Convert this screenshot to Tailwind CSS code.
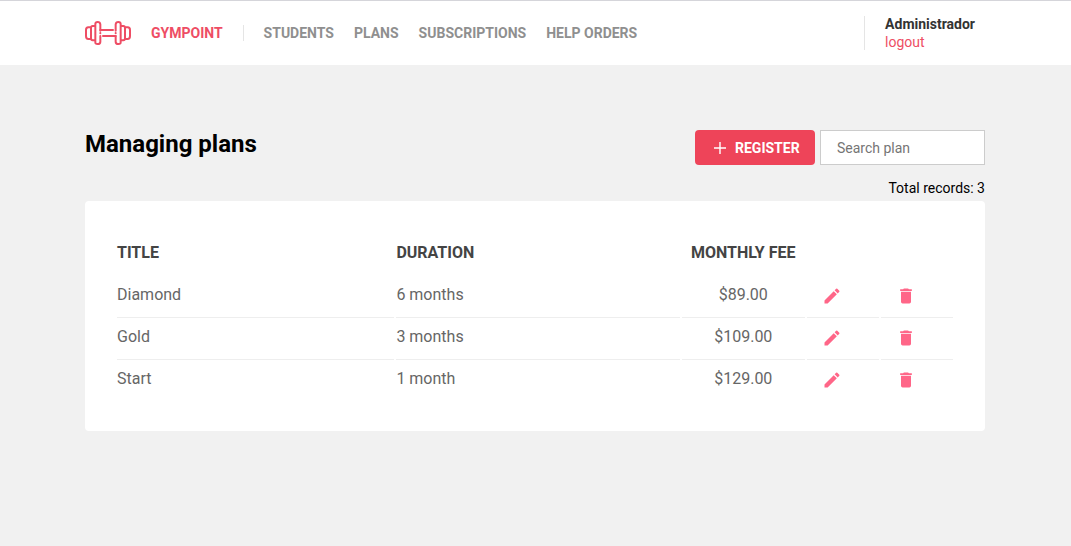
<!DOCTYPE html>
<html lang="en">
<head>
<meta charset="utf-8">
<meta name="viewport" content="width=device-width, initial-scale=1">
<title>Gympoint - Managing plans</title>
<script src="https://cdn.jsdelivr.net/npm/@tailwindcss/browser@4"></script>
</head>
<body class="min-h-screen bg-[#f1f1f1] font-[Roboto,sans-serif] text-sm text-black antialiased">
<svg class="hidden" aria-hidden="true">
  <symbol id="pencil" viewBox="0 0 24 24"><path d="M3 17.25V21h3.750L17.810 9.940l-3.750-3.750L3 17.250zM20.710 7.040a1 1 0 0 0 0-1.410l-2.340-2.340a1 1 0 0 0-1.410 0l-1.830 1.830 3.750 3.750 1.830-1.830z"/></symbol>
  <symbol id="trash" viewBox="0 0 24 24"><path d="M6 19a2 2 0 0 0 2 2h8a2 2 0 0 0 2-2V7H6v12zM19 4h-3.500l-1-1h-5l-1 1H5v2h14V4z"/></symbol>
</svg>
<header class="border-t border-[#d5d5da] bg-white pr-px">
  <div class="mx-auto flex h-16 max-w-[900px] items-center justify-between">
    <nav class="flex items-center font-bold text-[#8f8f8f]">
      <a href="#" class="flex items-center gap-5 text-[#ee4d64]">
        <svg class="h-6 w-[46px]" viewBox="0 0 138 72" fill="none" stroke="#ee4d64" stroke-width="6" stroke-linecap="round" stroke-linejoin="round" aria-hidden="true">
          <path d="M31 25V9Q31 3 38 3T46 10V29M46 45V62Q46 69 38 69T31 63V15H23Q18 15 18 21V51Q18 58 23 58H31M18 19H10Q3 19 3 27V45Q3 54 10 54H18"/>
          <path d="M107 25V9Q107 3 100 3T92 10V29M92 45V62Q92 69 100 69T107 63V15H115Q120 15 120 21V51Q120 58 115 58H107M120 19H128Q135 19 135 27V45Q135 54 128 54H120"/>
          <path d="M46 27H84M54 45H92M46 36V37M92 36V37"/>
        </svg>
        <span>GYMPOINT</span>
      </a>
      <div class="ml-5 flex h-4 items-center gap-5 border-l border-[#e5e5e5] pl-5">
        <a href="#">STUDENTS</a>
        <a href="#">PLANS</a>
        <a href="#">SUBSCRIPTIONS</a>
        <a href="#">HELP ORDERS</a>
      </div>
    </nav>
    <div class="flex h-[34px] flex-col justify-center border-l border-[#e5e5e5] pr-2.5 pl-5 leading-[18px]">
      <strong class="text-[#333333]">Administrador</strong>
      <a href="#" class="text-[#ee4d64]">logout</a>
    </div>
  </div>
</header>
<main class="pt-[65px] pr-px">
  <div class="mx-auto max-w-[900px]">
  <div class="flex items-start justify-between">
    <h1 class="text-2xl leading-7 font-bold">Managing plans</h1>
    <div class="flex gap-[5px]">
      <button type="button" class="flex h-[35px] w-[120px] items-center gap-1.5 rounded-sm bg-[#ee4459] pl-4 font-bold text-white">
        <svg class="size-[18px]" viewBox="0 0 18 18" fill="none" stroke="currentColor" stroke-width="1.4" aria-hidden="true"><path d="M9 3V15M3 9H15"/></svg>
        REGISTER
      </button>
      <input type="text" placeholder="Search plan" aria-label="Search plan" class="h-[35px] w-[165px] border border-[#cccccc] bg-white px-4 placeholder:text-[#757575]">
    </div>
  </div>
  <p class="mt-3.5 text-right leading-[18px]">Total records: 3</p>
  <section class="mt-1 rounded-sm bg-white p-[30px]">
    <table class="w-full table-fixed border-separate border-spacing-[2px] text-base leading-6 text-[#666666]">
      <colgroup><col class="w-[33.5%]"><col class="w-[34.2%]"><col><col class="w-[72px]"><col class="w-[72px]"></colgroup>
      <thead class="text-left text-[#444444]">
        <tr class="h-[43px] align-top">
          <th class="pt-2">TITLE</th>
          <th class="pt-2">DURATION</th>
          <th class="pt-2 text-center">MONTHLY FEE</th>
          <td></td>
          <td></td>
        </tr>
      </thead>
      <tbody class="align-top">
        <tr class="h-10">
          <td class="border-b border-[#eeeeee] pt-[5px]">Diamond</td>
          <td class="border-b border-[#eeeeee] pt-[5px]">6 months</td>
          <td class="border-b border-[#eeeeee] pt-[5px] text-center">$89.00</td>
          <td class="border-b border-[#eeeeee] pt-2 pl-[15px]"><button type="button" aria-label="Edit Diamond" class="block text-[#ff6688]"><svg class="size-5 fill-current"><use href="#pencil"/></svg></button></td>
          <td class="border-b border-[#eeeeee] pt-2 pl-[15px]"><button type="button" aria-label="Delete Diamond" class="block text-[#ff6688]"><svg class="size-5 fill-current"><use href="#trash"/></svg></button></td>
        </tr>
        <tr class="h-10">
          <td class="border-b border-[#eeeeee] pt-[5px]">Gold</td>
          <td class="border-b border-[#eeeeee] pt-[5px]">3 months</td>
          <td class="border-b border-[#eeeeee] pt-[5px] text-center">$109.00</td>
          <td class="border-b border-[#eeeeee] pt-2 pl-[15px]"><button type="button" aria-label="Edit Gold" class="block text-[#ff6688]"><svg class="size-5 fill-current"><use href="#pencil"/></svg></button></td>
          <td class="border-b border-[#eeeeee] pt-2 pl-[15px]"><button type="button" aria-label="Delete Gold" class="block text-[#ff6688]"><svg class="size-5 fill-current"><use href="#trash"/></svg></button></td>
        </tr>
        <tr class="h-[37px]">
          <td class="pt-[5px]">Start</td>
          <td class="pt-[5px]">1 month</td>
          <td class="pt-[5px] text-center">$129.00</td>
          <td class="pt-2 pl-[15px]"><button type="button" aria-label="Edit Start" class="block text-[#ff6688]"><svg class="size-5 fill-current"><use href="#pencil"/></svg></button></td>
          <td class="pt-2 pl-[15px]"><button type="button" aria-label="Delete Start" class="block text-[#ff6688]"><svg class="size-5 fill-current"><use href="#trash"/></svg></button></td>
        </tr>
      </tbody>
    </table>
  </section>
  </div>
</main>
</body>
</html>
